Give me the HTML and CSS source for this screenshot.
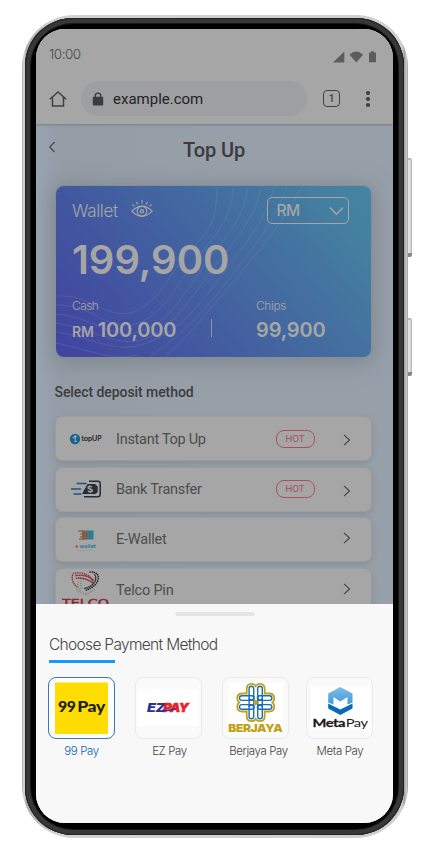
FILE: index.html
```html
<!DOCTYPE html>
<html lang="en">
<head>
<meta charset="utf-8">
<title>Top Up</title>
<link rel="stylesheet" href="styles.css">
</head>
<body>
<div class="phone">
  <span class="side-key volume"></span>
  <span class="side-key power"></span>
  <div class="bezel">
    <div class="screen">
      <header class="chrome">
        <div class="status">
          <span class="clock">10:00</span>
          <svg class="signals" width="44" height="12" viewBox="0 0 44 12"><path d="M0 11.5 11.3.5V11.5Z"/><path d="M16.5 3.7Q23.3-2.7 30 3.7L23.3 11.5Z"/><path d="M36 1.5H38V.3H41V1.5H43V11.3H36Z"/></svg>
        </div>
        <div class="browser">
          <svg class="home" width="18" height="18" viewBox="0 0 18 18"><path d="M.8 9.3 9 2 17.2 9.3M3.5 7.5V15.9H14.5V7.5"/></svg>
          <div class="url">
            <svg width="12" height="14" viewBox="0 0 12 14"><rect x=".8" y="4.8" width="10.4" height="8.6" rx="1"/><path d="M3.3 5V3.6a2.7 2.5 0 0 1 5.4 0V5" fill="none" stroke="#3b3c3e" stroke-width="1.4"/></svg>
            <span>example.com</span>
          </div>
          <span class="tabs">1</span>
          <svg class="dots" width="6" height="18" viewBox="0 0 6 18"><circle cx="3" cy="3" r="2.1"/><circle cx="3" cy="9" r="2.1"/><circle cx="3" cy="15" r="2.1"/></svg>
        </div>
      </header>
      <main class="page">
        <div class="title">
          <svg width="8" height="12" viewBox="0 0 8 12"><path d="M6.5 1 1.7 6 6.5 11"/></svg>
          <h1>Top Up</h1>
        </div>
        <section class="wallet">
          <svg class="waves" width="315" height="171" viewBox="0 0 315 171"><path d="M0 110C35 108 48 132 75 127C105 118 112 85 145 53C162 34 160 15 161 0"/><path d="M0 119C38 119 49 143 76 139C108 132 121 96 149 62C170 38 177 20 177 0"/><path d="M0 128C35 131 55 151 78 147C116 140 131 99 159 65C181 41 190 19 192 0"/><path d="M0 137C36 142 57 159 80 155C119 148 137 105 170 66C191 41 203 18 205 0"/><path d="M0 146C39 153 56 165 80 160C124 151 149 111 181 69C202 42 214 20 218 0"/><path d="M0 157C30 163 54 175 82 169M95 169C128 150 159 113 193 67C213 41 226 16 231 0"/><path d="M109 171C139 144 171 103 205 62C226 35 238 15 247 0"/></svg>
          <div class="wallet-top">
            <span class="wallet-name">Wallet</span>
            <svg class="eye" width="22" height="18" viewBox="0 0 22 18"><path d="M.8 11.2Q11 1 21.2 11.2Q11 21.5.8 11.2Z"/><circle cx="11" cy="11.2" r="4.8"/><circle cx="11" cy="11.2" r="1.6"/><path d="M1.5 4.3 3.4 6.3M5.5 1.7 6.8 4.4M11 .3V3.5M16.5 1.7 15.2 4.4M20.5 4.3 18.6 6.3"/></svg>
            <div class="currency">RM<svg width="15" height="10" viewBox="0 0 15 10"><path d="M1 1.5 7.5 8.2 14 1.5"/></svg></div>
          </div>
          <div class="total">199,900</div>
          <div class="split">
            <div class="part cash"><small>Cash</small><b><i>RM</i>100,000</b></div>
            <span class="rule"></span>
            <div class="part"><small>Chips</small><b>99,900</b></div>
          </div>
        </section>
        <h2>Select deposit method</h2>
        <div class="methods">
          <div class="row">
            <div class="logo"><svg width="48" height="36" viewBox="0 0 48 36"><circle cx="13" cy="18" r="5.2" fill="#1a638d"/><path d="M11 17 13 14.8 14.7 16M13.2 15V20.5H15" stroke="#8babbf" stroke-width="1.2" fill="none"/><text x="19.5" y="20.3" textLength="20" lengthAdjust="spacingAndGlyphs" font-family="Lato" font-weight="400" font-size="6.8" fill="#171717" stroke="#171717" stroke-width=".15">topUP</text></svg></div>
            <span class="name">Instant Top Up</span><span class="hot">HOT</span>
            <svg class="arrow" width="8" height="12" viewBox="0 0 8 12"><path d="M1 .8 6.5 6 1 11.2"/></svg>
          </div>
          <div class="row">
            <div class="logo"><svg width="48" height="36" viewBox="0 0 48 36"><path d="M15 12.5H24M9.5 18H18.5M12 23H19" stroke="#18557e" stroke-width="1.4" stroke-linecap="round"/><path d="M27 10.3H36Q38.2 10.3 38.2 12.5V23.5Q38.2 25.7 36 25.7H22" fill="none" stroke="#252d37" stroke-width="1.5"/><path d="M25.5 13H33L35.7 15.5V21L33.5 23H20Z" fill="#252d37"/><text x="25" y="21.3" font-family="Inter" font-size="9" font-weight="700" fill="#a6a6a6" transform="rotate(-8 28 18)">$</text></svg></div>
            <span class="name">Bank Transfer</span><span class="hot">HOT</span>
            <svg class="arrow" width="8" height="12" viewBox="0 0 8 12"><path d="M1 .8 6.5 6 1 11.2"/></svg>
          </div>
          <div class="row raised">
            <div class="logo"><svg width="48" height="36" viewBox="0 0 48 36"><rect x="20" y="8.5" width="11.5" height="9" fill="#297d96"/><path d="M16 9.2H22L27 13 22 17.2H17M18 12H25M18 14.8H24" fill="none" stroke="#9d5a27" stroke-width="1.2"/><path d="M22 10V16.5L25.5 13.2Z" fill="#9d5a27"/><text x="13.4" y="26.3" font-family="DejaVu Sans" font-weight="700" font-size="5" textLength="2.8" lengthAdjust="spacingAndGlyphs" fill="#a4541c">e</text><text x="17.8" y="26.3" font-family="DejaVu Sans" font-weight="700" font-size="5" textLength="16" lengthAdjust="spacingAndGlyphs" fill="#297d96">wallet</text><path d="M15 28.6H32" stroke="#8d9496" stroke-width=".6" stroke-dasharray="1.3 1.2"/></svg></div>
            <span class="name">E-Wallet</span>
            <svg class="arrow" width="8" height="12" viewBox="0 0 8 12"><path d="M1 .8 6.5 6 1 11.2"/></svg>
          </div>
          <div class="row raised">
            <div class="logo telco"><svg width="48" height="44" viewBox="0 0 48 44"><g fill="none" stroke-linecap="round"><path d="M31 14C30 7 22 2 11 4.5C9 10 11 15 15 18" stroke="#8a2732" stroke-width="1.5" stroke-dasharray=".1 2.1"/><path d="M31 11C27 7 20 5.5 13 6.5M30 13.5C24 9 17 8.5 13 9.5" stroke="#8a2732" stroke-width="1.6" stroke-dasharray=".1 1.7"/><path d="M28 3Q38 3 36 11C34 17 28 20 23 21.5M33 6Q35 10 31.5 14.5C29 17.5 26 19 22 19.5" stroke="#202020" stroke-width="1.6" stroke-dasharray=".1 2"/><path d="M16 13Q15 19 20 23M19 12Q18 17 20 21M15 21Q23 29 34 19M24 25.5 31 21.5" stroke="#777" stroke-width="1.2" stroke-dasharray=".1 2.3"/></g><text x="0" y="38" font-family="DejaVu Sans" font-size="10" textLength="47" lengthAdjust="spacingAndGlyphs" fill="#8a2732" stroke="#8a2732" stroke-width=".4">TELCO</text></svg></div>
            <span class="name">Telco Pin</span>
            <svg class="arrow" width="8" height="12" viewBox="0 0 8 12"><path d="M1 .8 6.5 6 1 11.2"/></svg>
          </div>
        </div>
      </main>
      <section class="sheet">
        <span class="grip"></span>
        <h3>Choose Payment Method</h3>
        <span class="underline"></span>
        <div class="options">
          <div class="option selected"><div class="tile"><svg width="65" height="60" viewBox="0 0 65 60"><rect x="6" y="4.5" width="53" height="51.5" fill="#ffdd00"/><g font-family="Lato" font-weight="900" font-size="15.5" fill="#20201c"><text x="9" y="34.2" textLength="17.5" lengthAdjust="spacingAndGlyphs">99</text><text x="28.3" y="34.2" textLength="27.5" lengthAdjust="spacingAndGlyphs">Pay</text></g></svg></div><span>99 Pay</span></div>
          <div class="option ez"><div class="tile"><svg width="65" height="60" viewBox="0 0 65 60"><rect x="1.5" y="11" width="61.5" height="37" fill="#fff"/><g font-family="Inter" font-size="11.8" font-weight="900" font-style="italic"><text x="11" y="33.5" textLength="18" lengthAdjust="spacingAndGlyphs" fill="#2c3192">EZ</text><text x="27.2" y="33.5" textLength="25.3" lengthAdjust="spacingAndGlyphs" fill="#eb2227" stroke="#eb2227" stroke-width=".5">PAY</text></g><path d="M26 33.5V31.7H30Q37 31.5 42 28.8Q38 33 30 33.5Z" fill="#2c3192"/></svg></div><span>EZ Pay</span></div>
          <div class="option berjaya"><div class="tile"><svg width="65" height="60" viewBox="0 0 65 60"><rect x="5" y="5" width="55" height="51" fill="#fff"/><g fill="none"><path d="M23.7 15.5V11Q23.7 5.8 28.5 5.8Q31.5 5.8 32.7 8Q34 5.8 37 5.8Q41.7 5.8 41.7 11V15.5H46Q51.3 15.5 51.3 20.3Q51.3 23 49.3 24.5Q51.3 26 51.3 28.7Q51.3 33.5 46 33.5H41.7V38Q41.7 43.2 37 43.2Q34 43.2 32.7 41Q31.5 43.2 28.5 43.2Q23.7 43.2 23.7 38V33.5H19.5Q14.2 33.5 14.2 28.7Q14.2 26 16.2 24.5Q14.2 23 14.2 20.3Q14.2 15.5 19.5 15.5Z" stroke="#c4a016" stroke-width="1.8"/><g stroke="#176eb7" stroke-width="1.4"><rect x="26.1" y="8.3" width="4.6" height="13.7" rx="2.3"/><rect x="34.7" y="8.3" width="4.6" height="13.7" rx="2.3"/><rect x="26.1" y="27" width="4.6" height="13.7" rx="2.3"/><rect x="34.7" y="27" width="4.6" height="13.7" rx="2.3"/><rect x="16.5" y="17.8" width="14.5" height="4.6" rx="2.3"/><rect x="34.4" y="17.8" width="14.5" height="4.6" rx="2.3"/><rect x="16.5" y="26.6" width="14.5" height="4.6" rx="2.3"/><rect x="34.4" y="26.6" width="14.5" height="4.6" rx="2.3"/><path d="M26.1 20V29M30.7 18V31M34.7 18V31M39.3 20V29"/></g></g><path d="m32.7 21.5 3 3-3 3-3-3Z" fill="#c4a016"/><text x="5.3" y="53.8" font-family="Inter" font-size="11" font-weight="900" textLength="54" lengthAdjust="spacingAndGlyphs" fill="#c4a016">BERJAYA</text></svg></div><span>Berjaya Pay</span></div>
          <div class="option meta"><div class="tile"><svg width="65" height="60" viewBox="0 0 65 60"><defs><linearGradient id="m" x2="0" y2="1"><stop stop-color="#83bce5"/><stop offset="1" stop-color="#399cdc"/></linearGradient></defs><rect x="4" y="8" width="59" height="44" fill="#fff"/><path d="M33.3 9 45.5 15.5V24.5L40.5 26.5V19L33.3 23.5 26.5 19V26.5L21.2 24.5V15.5Z" fill="url(#m)"/><path d="M21.2 25.5 33.3 31.5 45.5 25.5V30.5L33.3 37 21.2 30.5Z" fill="#0b6ab6"/><g font-size="12.2" fill="#1e1918"><text x="5.5" y="49.2" font-family="Lato" font-weight="700" stroke="#1e1918" stroke-width=".3" textLength="32.5" lengthAdjust="spacingAndGlyphs">Meta</text><text x="38.7" y="49.2" font-family="Lato" font-weight="400" textLength="22" lengthAdjust="spacingAndGlyphs">Pay</text></g></svg></div><span>Meta Pay</span></div>
        </div>
      </section>
    </div>
  </div>
</div>
</body>
</html>
```
FILE: styles.css
```css
* { box-sizing: border-box; }
body { margin: 0; width: 431px; height: 853px; padding: 15px 0 0 22px; background: #fff; overflow: hidden; font-family: Roboto, "Liberation Sans", sans-serif; }
svg { display: block; flex: none; }
h1, h2, h3 { margin: 0; }
.phone { position: relative; width: 386px; height: 823px; padding: 3px 4px 3px 3px; border-radius: 52px; background: linear-gradient(90deg, #aaa 0, #ddd 2px, #aaa 4px, #d2d2d2 30px, #cfcfcf 380px, #999 383px, #d9d9d9 384px, #999 386px); }
.side-key { position: absolute; left: 386px; width: 4px; border-radius: 0 2px 2px 0; background: linear-gradient(90deg, #e9e9e9, #d2d2d2 70%, #aaa); border-top: 2px solid #bbb; border-bottom: 4px solid #858585; }
.volume { top: 143px; height: 99px; }
.power { top: 303px; height: 58px; }
.bezel { height: 817px; padding: 11px; border-radius: 48px; background: #000; box-shadow: inset 0 0 0 1px #242424, inset 0 0 0 5px #383838, inset 0 0 0 6px #171717; }
.screen { display: flex; flex-direction: column; width: 357px; height: 794px; border-radius: 29px; overflow: hidden; background: #f8f8f8; }

.chrome { height: 95px; flex: none; background: #a6a6a6; box-shadow: 0 1px 2px #777e88; z-index: 1; }
.status { display: flex; justify-content: space-between; height: 52px; padding: 18px 16px 0 13px; }
.clock { font: 300 13.5px/15px Inter, sans-serif; letter-spacing: -.5px; color: #4c4c4c; }
.signals { margin-top: 4px; fill: #5c5c5c; }
.browser { display: flex; align-items: center; height: 35px; padding: 0 22px 0 13px; }
.home { fill: none; stroke: #3f4043; stroke-width: 1.5; }
.url { display: flex; align-items: center; gap: 9px; width: 226px; height: 35px; margin-left: 14px; padding-left: 11px; border-radius: 18px; background: #9d9fa1; color: #232426; font-size: 15px; }
.url svg { fill: #3b3c3e; }
.tabs { width: 17px; height: 17px; margin-left: 16px; border: 1.5px solid #404144; border-radius: 4px; text-align: center; font: 500 10px/15px Roboto, sans-serif; color: #404144; }
.dots { margin-left: auto; fill: #3d3e41; }

.page { height: 480px; flex: none; overflow: hidden; padding: 0 22px 0 19.5px; background: linear-gradient(90deg, #98a4b2, #949ca5 7%, #979fa9 50%, #979fa9); }
.title { display: flex; height: 62px; padding-top: 12px; margin-left: -7.5px; }
.title svg { margin-top: 5px; fill: none; stroke: #444; stroke-width: 1.1; }
h1 { flex: 1; padding-left: 1px; text-align: center; font: 500 20px/28px Roboto, sans-serif; letter-spacing: -.1px; color: #3a3b3c; }
.wallet { position: relative; width: 315px; height: 171px; padding: 11px 22px 0 16.5px; border-radius: 8px; color: #a6a6a6; font-family: Inter, sans-serif; background: linear-gradient(50deg, #4142a0 0%, #4358a0 32%, #446ea0 64%, #447da0 84%, #4385a0 100%); box-shadow: 0 0 0 1px #868e96, 0 3px 20px 3px #7f868e; }
.waves { position: absolute; left: 0; top: 0; fill: none; stroke: #8197b4; stroke-width: .7; opacity: .35; }
.wallet-top { display: flex; height: 27px; }
.wallet-name { width: 59px; font-size: 17px; line-height: 29px; letter-spacing: -.35px; font-weight: 300; }
.eye { margin-top: 3px; fill: none; stroke: #a6a6a6; stroke-width: 1.2; }
.currency { display: flex; align-items: center; justify-content: space-between; width: 82px; height: 27px; margin-left: auto; padding: 0 4px 0 9px; border: 1.5px solid #a6a6a6; border-radius: 5px; font-size: 15.5px; font-weight: 500; letter-spacing: -.6px; }
.currency svg { fill: none; stroke: #a6a6a6; stroke-width: 1.6; }
.total { height: 73px; font-size: 40px; font-weight: 600; line-height: 72px; letter-spacing: -.05px; }
.split { display: flex; }
.part { width: 100px; }
.part small { display: block; height: 19px; font-size: 12px; font-weight: 300; line-height: 18px; letter-spacing: -.4px; }
.cash small { letter-spacing: -.6px; }
.part b { display: block; white-space: nowrap; font-size: 20px; font-weight: 600; line-height: 28px; letter-spacing: -.15px; }
.part i { margin-right: 4px; font-style: normal; font-size: 14px; }
.cash { width: 139px; }
.rule { width: 1px; height: 18px; margin: 22px 44px 0 0; background: #8b92a5; }
.cash, .rule { flex: none; }
h2 { height: 60px; padding-top: 25px; margin-left: -1px; font: 500 14px/20px Roboto, sans-serif; letter-spacing: -.07px; color: #3b3d3e; }
.methods { display: flex; flex-direction: column; gap: 7.7px; }
.row { display: flex; align-items: center; flex: none; width: 315px; height: 43px; padding: 0 20px 0 6px; border-radius: 6px; background: #a6a6a6; box-shadow: 0 0 0 1px #9a9c9e, 0 2px 6px #818991; }
.logo { display: flex; width: 54.5px; height: 43px; align-items: center; }
.telco { align-items: flex-start; }
.name { margin-top: 2px; flex: 1; font-size: 14.5px; line-height: 20px; letter-spacing: -.28px; color: #4d4d4d; }
.raised .name { margin-top: 0; letter-spacing: -.2px; }
.hot { width: 39px; height: 18px; margin-right: 28px; border: 1px solid #a84f64; border-radius: 8px; color: #a34c61; text-align: center; font: 400 9px/16px Inter, sans-serif; }
.arrow { margin-top: 3px; fill: none; stroke: #424242; stroke-width: 1.1; }
.raised .arrow { margin-top: -4px; }

.sheet { flex: 1; padding: 8px 13px 0; background: #f8f8f8; font-family: Inter, sans-serif; color: #454545; }
.grip { display: block; width: 80px; height: 4px; margin-left: 126px; border-radius: 2px; background: #e5e5e5; }
h3 { margin-top: 19px; height: 25px; white-space: nowrap; font: 300 15.5px/20px Inter, sans-serif; letter-spacing: -.68px; }
.underline { display: block; width: 66px; height: 3px; background: #1598ff; }
.options { display: flex; margin: 14px 0 0 -1px; }
.option { width: 67px; margin-right: 20px; text-align: center; font-size: 11.5px; font-weight: 300; letter-spacing: -.38px; line-height: 14px; white-space: nowrap; }
.ez > span { margin-left: 2px; }
.berjaya { margin-right: 17px; }
.berjaya > span { margin-left: 6px; }
.meta > span { margin-left: 1px; }
.tile { width: 67px; height: 62px; margin-bottom: 5px; border: 1px solid #ebebeb; border-radius: 8px; background: #fafafa; overflow: hidden; }
.selected .tile { border-color: #3478bd; background: #fdfdfd; }
.selected { color: #1763b5; }
```
